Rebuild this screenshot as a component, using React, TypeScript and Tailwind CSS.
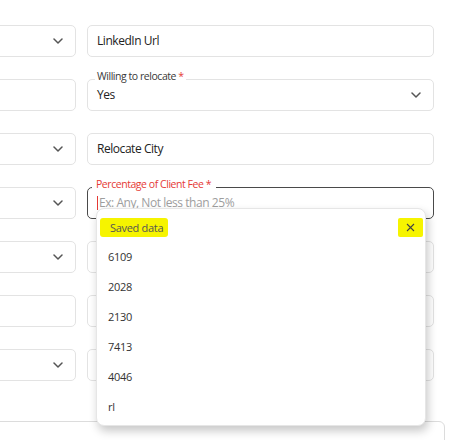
import React from "react";

const savedValues = ["6109", "2028", "2130", "7413", "4046", "rl"];

function Chevron() {
  return (
    <svg width="10" height="6" viewBox="0 0 10 6" fill="none" className="shrink-0">
      <path d="M1 1l4 4 4-4" stroke="#555" strokeWidth="1.5" strokeLinecap="round" strokeLinejoin="round" />
    </svg>
  );
}

// 일반 입력칸 (select 는 chevron 포함)
function Field({ value, select, label }: { value?: string; select?: boolean; label?: string }) {
  return (
    <div className="relative h-[32px] rounded-[5px] border border-[#e3e3e3] bg-white flex items-center pl-[9px] pr-[12px]">
      {label && (
        <span className="absolute left-[7px] top-[-11px] bg-white px-[2px] text-[10.5px] leading-[14px] tracking-[-0.45px] text-[#3a3a3a]">
          {label} <span className="text-[#e53935]">*</span>
        </span>
      )}
      <span className="flex-1 text-[12px] tracking-[-0.45px] text-[#222]">{value}</span>
      {select && <Chevron />}
    </div>
  );
}

function SavedDataMenu() {
  return (
    <div className="absolute left-[8px] top-[20px] z-10 w-[330px] h-[218px] rounded-[8px] border border-[#e6e6e6] bg-white pt-[9px] shadow-[2px_5px_10px_rgba(0,0,0,0.22)]">
      <div className="flex items-center justify-between pl-[3px] pr-[2px] h-[19px]">
        <span className="bg-[#f6f400] rounded-[3px] pl-[10px] pr-[5px] text-[11px] leading-[19px] tracking-[-0.3px] text-[#555]">
          Saved data
        </span>
        <button type="button" className="bg-[#f6f400] w-[25px] h-[19px] flex items-center justify-center rounded-[2px]">
          <svg width="9" height="9" viewBox="0 0 9 9">
            <path d="M1 1l7 7M8 1l-7 7" stroke="#444" strokeWidth="1.1" />
          </svg>
        </button>
      </div>
      <ul className="mt-[5px]">
        {savedValues.map((v) => (
          <li key={v} className="h-[30px] flex items-center pl-[11px] text-[11px] tracking-[-0.3px] text-[#333]">
            {v}
          </li>
        ))}
      </ul>
    </div>
  );
}

export default function App() {
  return (
    <div className="w-[467px] h-[440px] overflow-hidden bg-white font-['Open_Sans',sans-serif]">
      <div className="ml-[-271px] w-[716px] pt-[25px]">
        <div className="grid grid-cols-[347px_347px] gap-x-[11px] gap-y-[22px]">
          <Field select />
          <Field value="LinkedIn Url" />

          <Field />
          <Field value="Yes" select label="Willing to relocate" />

          <Field select />
          <Field value="Relocate City" />

          <Field select />
          {/* 포커스된 수수료 입력칸 */}
          <div className="relative h-[32px] rounded-[5px] border border-[#4a4a4a] bg-white flex items-center pl-[9px]">
            <span className="absolute left-[4px] top-[-11px] bg-white pl-[4px] pr-[5px] text-[10.5px] leading-[14px] tracking-[-0.45px] text-[#e53935]">
              Percentage of Client Fee *
            </span>
            <span className="w-px h-[14px] bg-[#e53935] mr-[1px]" />
            <span className="text-[12px] tracking-[-0.45px] text-[#9e9e9e]">Ex: Any, Not less than 25%</span>
            <SavedDataMenu />
          </div>

          <Field select />
          <Field />

          <Field />
          <Field />

          <Field select />
          <Field />
        </div>
        <div className="mt-[40px] h-[60px] rounded-[6px] border border-[#dcdcdc] bg-white" />
      </div>
    </div>
  );
}
